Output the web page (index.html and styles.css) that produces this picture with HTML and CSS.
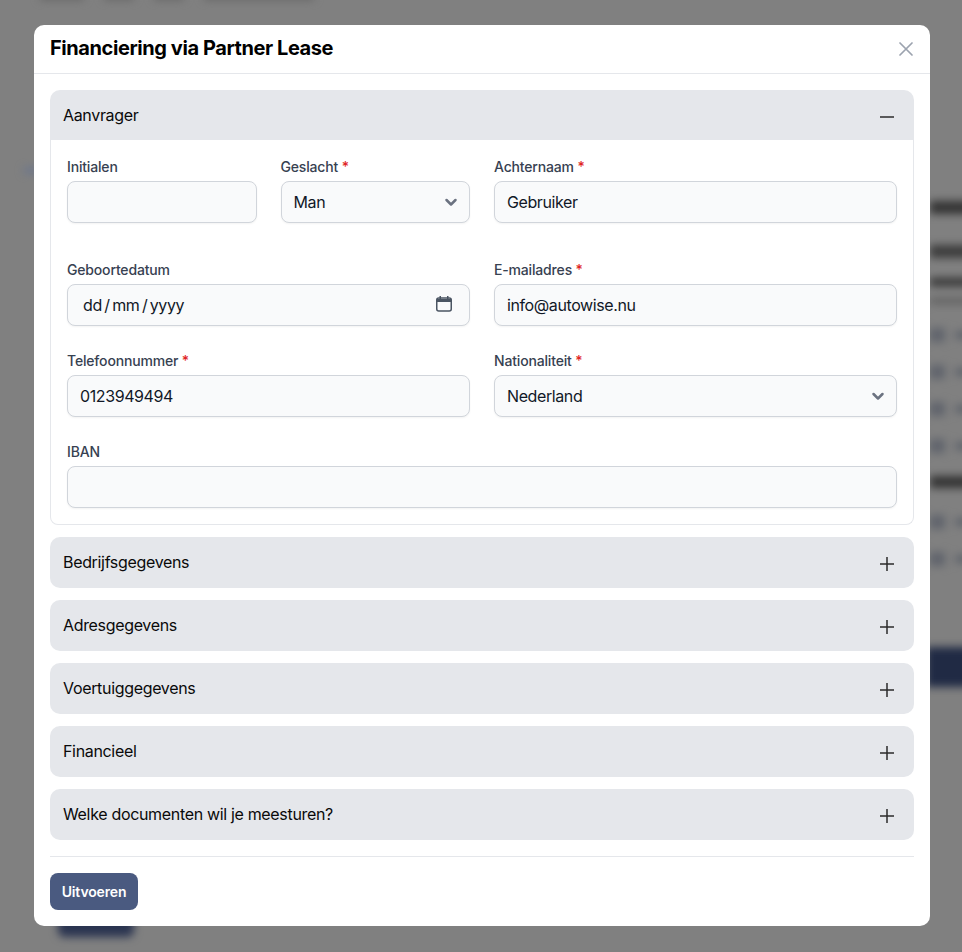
FILE: index.html
```html
<!DOCTYPE html>
<html lang="en">
<head>
    <meta charset="UTF-8">
    <meta name="viewport" content="width=device-width, initial-scale=1.0">
    <title>Financiering via Partner Lease</title>
    <link rel="stylesheet" href="styles.css">
</head>
<body>
    <div class="backdrop" aria-hidden="true">
        <div class="bg-crumbs"><i></i><i></i><i></i><i></i></div>
        <div class="bg-link"></div>
        <div class="bg-side">
            <div class="bg-bar bg-title"></div>
            <div class="bg-bar bg-name"></div>
            <div class="bg-bar bg-strong"></div>
            <div class="bg-bar bg-small"></div>
            <div class="bg-row"><i></i><i></i></div>
            <div class="bg-row"><i></i><i></i></div>
            <div class="bg-row"><i></i><i></i></div>
            <div class="bg-row"><i></i><i></i></div>
            <div class="bg-bar bg-title-2"></div>
            <div class="bg-row"><i></i><i></i></div>
            <div class="bg-row"><i></i><i></i></div>
        </div>
        <div class="bg-btn-side"></div>
        <div class="bg-btn-bottom"></div>
    </div>

    <div class="modal">
        <div class="modal-header">
            <h2>Financiering via Partner Lease</h2>
            <button class="close" type="button">
                <svg width="20" height="20" viewBox="0 0 20 20" fill="none" stroke="#9ca3af" stroke-width="1.75" stroke-linecap="round"><path d="M4 4l12 12M16 4L4 16"/></svg>
            </button>
        </div>
        <div class="modal-body">
            <div class="accordion">
                <div class="acc-item">
                    <div class="acc-head acc-head-open">
                        <span>Aanvrager</span>
                        <svg width="20" height="20" viewBox="0 0 20 20" fill="none" stroke="#2b2b2b" stroke-width="1.5"><path d="M3 10h14"/></svg>
                    </div>
                    <div class="acc-panel">
                        <div class="form-row form-row-first">
                            <div class="half-split">
                                <div class="field">
                                    <label>Initialen</label>
                                    <input type="text">
                                </div>
                                <div class="field">
                                    <label>Geslacht <b>*</b></label>
                                    <div class="control">
                                        <input type="text" value="Man">
                                        <svg class="chevron" width="20" height="20" viewBox="0 0 20 20" fill="none" stroke="#6b7280" stroke-width="2.5" stroke-linecap="round" stroke-linejoin="round"><path d="M5.500 8l4.500 4.500L14.500 8"/></svg>
                                    </div>
                                </div>
                            </div>
                            <div class="field">
                                <label>Achternaam <b>*</b></label>
                                <input type="text" value="Gebruiker">
                            </div>
                        </div>
                        <div class="form-row">
                            <div class="field">
                                <label>Geboortedatum</label>
                                <div class="control">
                                    <input class="date" type="text" value="dd&thinsp;/&thinsp;mm&thinsp;/&thinsp;yyyy">
                                    <svg class="calendar" width="18" height="18" viewBox="0 0 18 18" fill="none" stroke="#4b5563" stroke-width="1.5"><rect x="1.75" y="3" width="14.5" height="13" rx="2"/><path d="M1.75 5.5h14.5" stroke-width="3"/><path d="M5.25 1v3M12.75 1v3"/></svg>
                                </div>
                            </div>
                            <div class="field">
                                <label>E-mailadres <b>*</b></label>
                                <input type="text" value="info@autowise.nu">
                            </div>
                        </div>
                        <div class="form-row">
                            <div class="field">
                                <label>Telefoonnummer <b>*</b></label>
                                <input type="text" value="0123949494">
                            </div>
                            <div class="field">
                                <label>Nationaliteit <b>*</b></label>
                                <div class="control">
                                    <input type="text" value="Nederland">
                                    <svg class="chevron" width="20" height="20" viewBox="0 0 20 20" fill="none" stroke="#6b7280" stroke-width="2.5" stroke-linecap="round" stroke-linejoin="round"><path d="M5.500 8l4.500 4.500L14.500 8"/></svg>
                                </div>
                            </div>
                        </div>
                        <div class="field">
                            <label>IBAN</label>
                            <input type="text">
                        </div>
                    </div>
                </div>

                <div class="acc-head">
                    <span>Bedrijfsgegevens</span>
                    <svg width="20" height="20" viewBox="0 0 20 20" fill="none" stroke="#2b2b2b" stroke-width="1.5"><path d="M3 10h14M10 3v14"/></svg>
                </div>
                <div class="acc-head">
                    <span>Adresgegevens</span>
                    <svg width="20" height="20" viewBox="0 0 20 20" fill="none" stroke="#2b2b2b" stroke-width="1.5"><path d="M3 10h14M10 3v14"/></svg>
                </div>
                <div class="acc-head">
                    <span>Voertuiggegevens</span>
                    <svg width="20" height="20" viewBox="0 0 20 20" fill="none" stroke="#2b2b2b" stroke-width="1.5"><path d="M3 10h14M10 3v14"/></svg>
                </div>
                <div class="acc-head">
                    <span>Financieel</span>
                    <svg width="20" height="20" viewBox="0 0 20 20" fill="none" stroke="#2b2b2b" stroke-width="1.5"><path d="M3 10h14M10 3v14"/></svg>
                </div>
                <div class="acc-head">
                    <span>Welke documenten wil je meesturen?</span>
                    <svg width="20" height="20" viewBox="0 0 20 20" fill="none" stroke="#2b2b2b" stroke-width="1.5"><path d="M3 10h14M10 3v14"/></svg>
                </div>
            </div>
            <div class="modal-footer">
                <button class="primary" type="button">Uitvoeren</button>
            </div>
        </div>
    </div>
</body>
</html>
```

FILE: styles.css
```css
* {box-sizing: border-box;}

html, body {
    height: 100%;
}

body {
    margin: 0;
    overflow: hidden;
    background-color: #808080;
    font-family: Inter, "Liberation Sans", sans-serif;
    padding-top: 25px;
}

/* blurred page behind the dialog */
.backdrop {
    position: absolute;
    inset: 0;
    filter: blur(4px);
}

.bg-crumbs {
    position: absolute;
    left: 40px;
    top: -7px;
    display: flex;
    gap: 20px;
}

.bg-crumbs i {
    width: 30px;
    height: 7px;
    background-color: #666;
}

.bg-crumbs i:first-child {
    width: 44px;
}

.bg-crumbs i:last-child {
    width: 110px;
}

.bg-link {
    position: absolute;
    left: 24px;
    top: 168px;
    width: 14px;
    height: 5px;
    background-color: #66738f;
}

.bg-side {
    position: absolute;
    left: 930px;
    top: 201px;
    width: 60px;
}

.bg-bar {
    background-color: #3a3a3a;
}

.bg-title {
    height: 13px;
    margin-bottom: 31px;
    background-color: #333;
}

.bg-name {
    height: 13px;
    margin-bottom: 20px;
    background-color: #3c3c3c;
}

.bg-strong {
    height: 8px;
    margin-bottom: 12px;
    background-color: #333;
}

.bg-small {
    height: 6px;
    margin-bottom: 24px;
    background-color: #5f5f5f;
}

.bg-row {
    height: 14px;
    margin-bottom: 23px;
    display: flex;
    gap: 10px;
}

.bg-row i {
    width: 15px;
    height: 14px;
    background-color: #5f636b;
}

.bg-row i + i {
    width: 30px;
    height: 8px;
    margin-top: 3px;
}

.bg-title-2 {
    height: 12px;
    margin-top: 20px;
    margin-bottom: 27px;
    background-color: #333;
}

.bg-btn-side {
    position: absolute;
    left: 926px;
    top: 647px;
    width: 60px;
    height: 40px;
    background-color: #202a44;
}

.bg-btn-bottom {
    position: absolute;
    left: 58px;
    top: 900px;
    width: 76px;
    height: 37px;
    border-radius: 6px;
    background-color: #2a3450;
}

.modal {
    position: relative;
    width: 896px;
    height: 901px;
    margin-left: 34px;
    background-color: white;
    border-radius: 10px;
}

.modal-header {
    height: 49px;
    padding: 0 14px 0 16px;
    display: flex;
    align-items: center;
    justify-content: space-between;
    border-bottom: 1px solid #e5e7eb;
}

.modal-header h2 {
    margin: 0 0 2px;
    font-size: 20px;
    font-weight: 700;
    letter-spacing: -0.42px;
    color: #000;
}

.close {
    display: flex;
    padding: 0;
    border: none;
    background: none;
}

.modal-body {
    padding: 16px;
}

.accordion {
    display: flex;
    flex-direction: column;
    gap: 12px;
}

.acc-head {
    height: 51px;
    padding: 0 17px 1px 13px;
    display: flex;
    align-items: center;
    justify-content: space-between;
    background-color: #e5e7eb;
    border-radius: 10px;
    font-size: 16px;
    letter-spacing: -0.33px;
    color: #0a0a0a;
}

.acc-head svg {
    margin-top: 4px;
}

.acc-head-open {
    height: 50px;
    padding-bottom: 0;
    border-radius: 10px 10px 0 0;
}

.acc-head-open svg {
    margin-top: 3px;
}

.acc-panel {
    padding: 17px 16px 16px;
    border: 1px solid #e5e7eb;
    border-top: none;
    border-radius: 0 0 8px 8px;
    display: flex;
    flex-direction: column;
    gap: 25px;
}

.form-row {
    display: grid;
    grid-template-columns: 1fr 1fr;
    gap: 24px;
}

.form-row-first {
    margin-bottom: 12px;
}

.half-split {
    display: grid;
    grid-template-columns: 1fr 1fr;
    gap: 24px;
}

.field label {
    display: block;
    height: 20px;
    margin-bottom: 4px;
    font-size: 14px;
    font-weight: 550;
    line-height: 20px;
    letter-spacing: -0.17px;
    color: #374151;
}

.field label b {
    color: #e02424;
    font-weight: 500;
}

.field input {
    display: block;
    width: 100%;
    height: 42px;
    padding: 0 12px;
    background-color: #f9fafb;
    border: 1px solid #d1d5db;
    border-radius: 8px;
    box-shadow: 0 1px 2px rgba(0, 0, 0, 0.05);
    font-family: inherit;
    font-size: 16px;
    letter-spacing: -0.4px;
    color: #111827;
    outline: none;
}

.field input.date {
    padding-left: 15px;
}

.control {
    position: relative;
}

.chevron {
    position: absolute;
    right: 9px;
    top: 11px;
}

.calendar {
    position: absolute;
    right: 17px;
    top: 11px;
}

.modal-footer {
    margin-top: 16px;
    padding-top: 16px;
    border-top: 1px solid #e5e7eb;
}

.primary {
    display: block;
    width: 88px;
    height: 37px;
    padding: 0;
    border: none;
    border-radius: 8px;
    background-color: #4a5a80;
    color: white;
    font-family: inherit;
    font-size: 14px;
    font-weight: 600;
    letter-spacing: -0.15px;
}
```
